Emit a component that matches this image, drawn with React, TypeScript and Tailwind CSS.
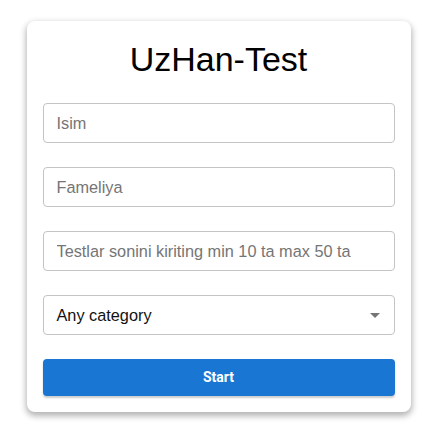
import React from "react";

export default function App() {
  const font = { fontFamily: '"Liberation Sans", Arial, sans-serif' };
  const inputCls =
    "h-[40px] w-full rounded-[4px] border border-[#c4c4c4] px-[13px] text-[16.3px] text-black outline-none placeholder:text-[#757575]";
  return (
    <div className="w-[437px] h-[431px] bg-white pt-[21px]" style={font}>
      <div className="mx-auto w-[384px] rounded-[8px] bg-white px-4 pt-[18px] pb-4 shadow-[0_3px_6px_1px_rgba(0,0,0,0.3)]">
        <h1 className="text-center text-[34px] leading-[40px] text-black">UzHan-Test</h1>
        <div className="mt-6 flex flex-col gap-6">
          <input placeholder="Isim" className={inputCls} />
          <input placeholder="Fameliya" className={inputCls} />
          <input placeholder="Testlar sonini kiriting min 10 ta max 50 ta" className={inputCls} />
          <div className="flex h-[40px] w-full items-center justify-between rounded-[4px] border border-[#c4c4c4] pl-[13px] pr-[14px]">
            <span className="text-[16.3px] text-[#111]">Any category</span>
            <svg width="10" height="5" viewBox="0 0 10 5">
              <path d="M0 0 L10 0 L5 5 Z" fill="#757575" />
            </svg>
          </div>
          <button
            className="h-[37px] w-full rounded-[4px] bg-[#1976d2] text-[14px] font-bold text-white shadow-[0_2px_2px_rgba(0,0,0,0.2)]"
            style={{ fontFamily: 'Roboto, "Liberation Sans", sans-serif' }}
          >
            Start
          </button>
        </div>
      </div>
    </div>
  );
}
